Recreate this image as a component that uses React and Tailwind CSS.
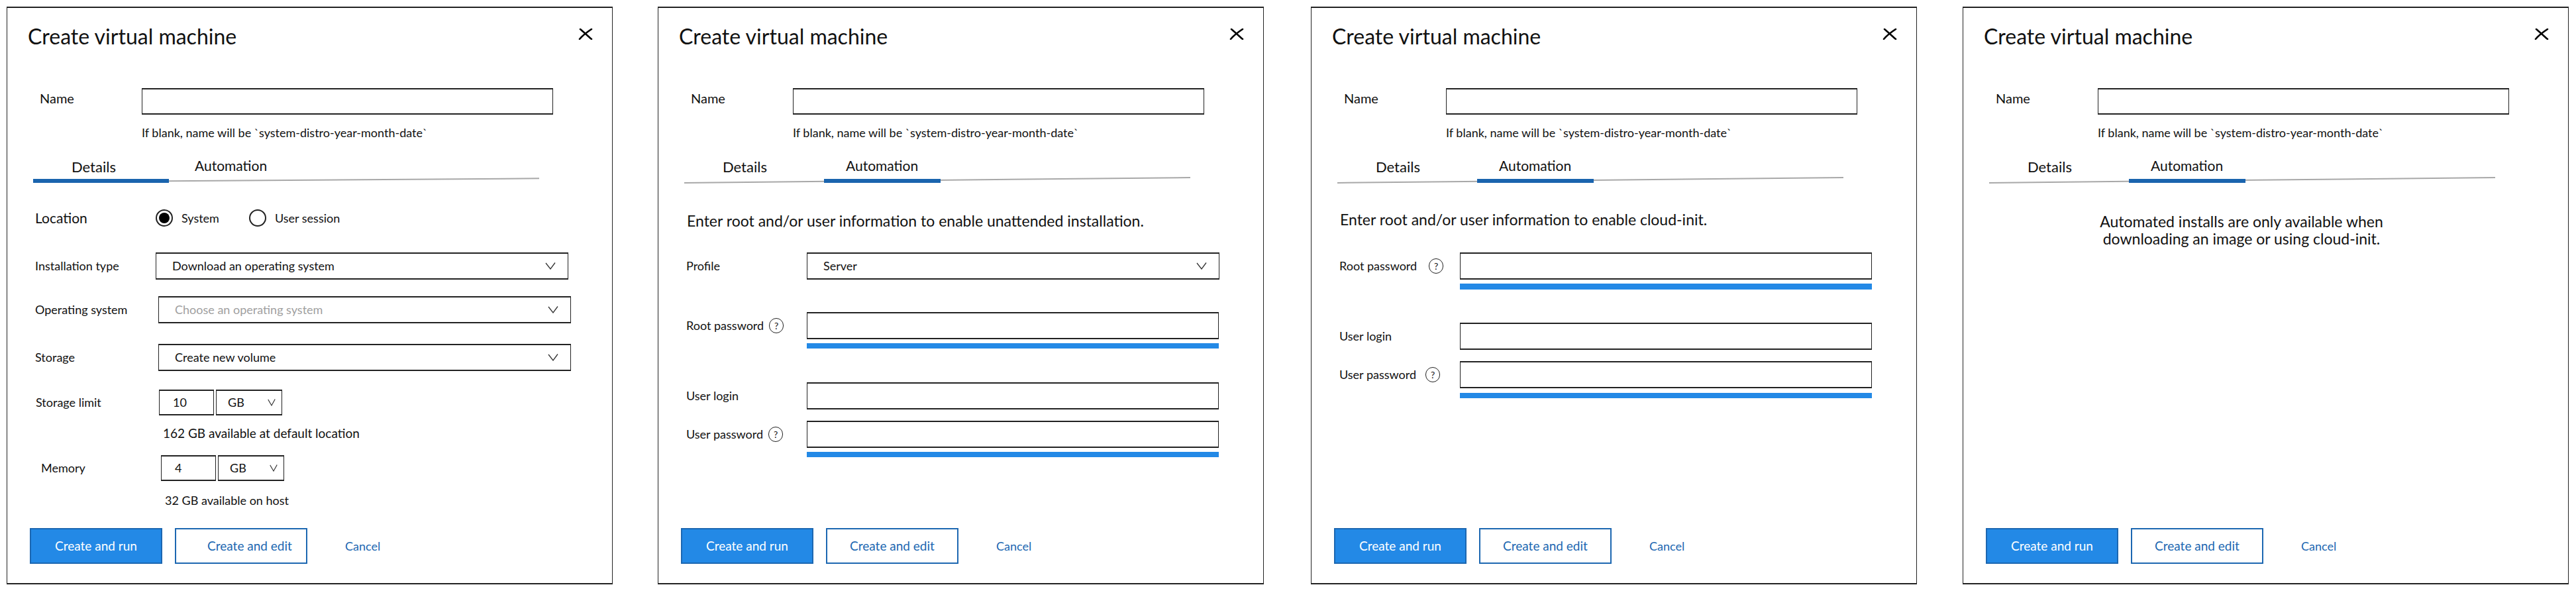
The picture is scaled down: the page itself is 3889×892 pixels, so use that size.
import React from "react";

function Chevron({ small }) {
  return (
    <svg className={small ? "h-[11px] w-[12px] shrink-0" : "h-[11px] w-[16px] shrink-0"} viewBox="0 0 16 11" preserveAspectRatio="none" fill="none">
      <path d="M1 1 L8 10 L15 0.5" stroke="#333" strokeWidth="1.3" />
    </svg>
  );
}

function CloseX() {
  return (
    <svg className="mt-[8px] h-[17px] w-[22px]" viewBox="0 0 22 17" fill="none">
      <path d="M3 1 C8 5 14 11 20 16 M20 1 C14 5 7 10 2 16" stroke="#000" strokeWidth="2.6" strokeLinecap="round" />
    </svg>
  );
}

function Select({ text, muted, className }) {
  return (
    <div className={"flex h-[41px] w-[623px] items-center justify-between border-y-2 border-x border-[#222] pl-[24px] pr-[18px] text-[18px] " + (muted ? "text-[#a0a0a0] " : "") + (className || "")}>
      <span>{text}</span>
      <Chevron />
    </div>
  );
}

function Input({ className }) {
  return <div className={"h-[41px] w-[622px] border-y-2 border-x border-[#222] " + (className || "")} />;
}

function Bar({ className }) {
  return <div className={"ml-[224px] h-[8px] w-[622px] bg-[#2389e6] " + (className || "")} />;
}

function Help({ className }) {
  return (
    <span className={"flex h-[23px] w-[22px] items-center justify-center rounded-full border border-[#222] text-[14px] leading-none " + (className || "")}>?</span>
  );
}

function Row({ label, labelClass, className, children }) {
  return (
    <div className={"flex items-center " + (className || "")}>
      <div className={"w-[224px] shrink-0 pl-[42px] " + (labelClass || "text-[18px]")}>{label}</div>
      {children}
    </div>
  );
}

function Radio({ on }) {
  return (
    <span className="flex h-[26px] w-[26px] shrink-0 items-center justify-center rounded-full border-2 border-[#222]">
      {on ? <span className="h-[16px] w-[16px] rounded-full bg-black" /> : null}
    </span>
  );
}

function Sized({ value, hintValue, className, hintClass, labelClass, label }) {
  return (
    <>
      <div className={"flex items-center " + (className || "")}>
        <div className={"shrink-0 text-[18px] " + labelClass}>{label}</div>
        <div className="flex h-[39px] w-[83px] items-center border-y-2 border-x border-[#222] pl-[20px] text-[18px]">{value}</div>
        <div className="ml-[3px] flex h-[39px] w-[100px] items-center justify-between border-y-2 border-x border-[#222] pl-[17px] pr-[9px] text-[18px]">
          <span>GB</span>
          <Chevron small />
        </div>
      </div>
      <div className={"h-[20px] leading-[20px] " + hintClass}>{hintValue}</div>
    </>
  );
}

function Footer({ editClass }) {
  return (
    <div className="mt-auto flex items-center pb-[29px] pl-[34px] text-[19px]">
      <button className="h-[54px] w-[200px] border-2 border-[#1c67b1] bg-[#2389e6] text-white">Create and run</button>
      <button className={"ml-[19px] h-[54px] w-[200px] border-2 border-[#1c67b1] bg-white text-[#1c67b1] " + (editClass || "")}>Create and edit</button>
      <span className="ml-[57px] text-[18px] text-[#1c67b1]">Cancel</span>
    </div>
  );
}

function Panel({ active, className, children, editClass, lineClass }) {
  return (
    <div className={"flex h-[872px] w-[915px] shrink-0 flex-col border-y-2 border-x border-[#222] bg-white text-[#111] " + (className || "")}>
      <div className="flex items-start justify-between pl-[31px] pr-[29px] pt-[23px]">
        <h1 className="h-[40px] text-[32px] font-normal leading-[40px]">Create virtual machine</h1>
        <CloseX />
      </div>
      <div className="mt-[58px] flex items-center pl-[49px]">
        <div className="-mt-[10px] w-[154px] text-[20px]">Name</div>
        <div className="h-[40px] w-[621px] border-y-2 border-x border-[#222]" />
      </div>
      <div className="mt-[17px] h-[20px] pl-[203px] text-[18px] leading-[20px]">If blank, name will be `system-distro-year-month-date`</div>
      <div className="relative z-10 ml-[39px] mt-[26px] flex h-[40px] w-[764px]">
        <div className={"flex h-[40px] w-[205px] items-start pl-[58px] pt-[2px] text-[22px] leading-[28px] " + (active === 0 ? "border-b-[6px] border-[#1a64ae]" : "")}>Details</div>
        <div className={"ml-[6px] flex h-[40px] w-[176px] items-start pl-[33px] text-[21px] leading-[28px] " + (active === 1 ? "border-b-[6px] border-[#1a64ae]" : "")}>Automation</div>
      </div>
      <div className={"ml-[39px] -mt-[5px] h-[2px] w-[764px] bg-[#a8a8a8] " + (lineClass || "")} />
      {children}
      <Footer editClass={editClass} />
    </div>
  );
}

export default function App() {
  return (
    <div className="flex min-h-[892px] w-[3889px] items-start bg-white pl-[10px] pt-[10px] [font-family:Lato,sans-serif]">
      <Panel active={0} editClass="pl-[26px]" lineClass="-rotate-[0.4deg]">
        <Row label="Location" labelClass="text-[21px] leading-[26px]" className="mt-[43px] h-[26px]">
          <Radio on />
          <span className="ml-[13px] text-[18px] leading-[26px]">System</span>
          <span className="ml-[45px]"><Radio /></span>
          <span className="ml-[13px] text-[18px] leading-[26px]">User session</span>
        </Row>
        <Row label="Installation type" className="mt-[39px]">
          <Select text="Download an operating system" />
        </Row>
        <Row label="Operating system" className="mt-[25px]">
          <Select text="Choose an operating system" muted className="ml-[4px] h-[39px]" />
        </Row>
        <Row label="Storage" className="mt-[31px]">
          <Select text="Create new volume" className="ml-[4px] h-[39px]" />
        </Row>
        <Sized label="Storage limit" labelClass="w-[229px] pl-[43px]" value="10" className="mt-[28px]" hintValue="162 GB available at default location" hintClass="mt-[17px] pl-[235px] text-[19px]" />
        <Sized label="Memory" labelClass="w-[232px] pl-[51px]" value="4" className="mt-[23px]" hintValue="32 GB available on host" hintClass="mt-[19px] pl-[238px] text-[18px]" />
      </Panel>

      <Panel active={1} className="ml-[68px]" lineClass="-rotate-[0.6deg]">
        <div className="ml-[43px] mt-[46px] h-[28px] text-[23px] leading-[28px]">Enter root and/or user information to enable unattended installation.</div>
        <Row label="Profile" className="mt-[34px]">
          <Select text="Server" />
        </Row>
        <Row label={<span className="flex items-center">Root password<Help className="ml-[8px]" /></span>} className="mt-[49px]">
          <Input />
        </Row>
        <Bar className="mt-[6px]" />
        <Row label="User login" className="mt-[51px]">
          <Input className="h-[40px]" />
        </Row>
        <Row label={<span className="flex items-center">User password<Help className="ml-[8px]" /></span>} className="mt-[17px]">
          <Input />
        </Row>
        <Bar className="mt-[6px]" />
      </Panel>

      <Panel active={1} className="ml-[71px]" lineClass="-rotate-[0.6deg]">
        <div className="ml-[43px] mt-[44px] h-[28px] text-[23px] leading-[28px]">Enter root and/or user information to enable cloud-init.</div>
        <Row label={<span className="flex items-center">Root password<Help className="ml-[18px]" /></span>} className="mt-[36px]">
          <Input />
        </Row>
        <Bar className="mt-[6px] h-[9px]" />
        <Row label="User login" className="mt-[50px]">
          <Input className="h-[40px]" />
        </Row>
        <Row label={<span className="flex items-center">User password<Help className="ml-[14px]" /></span>} className="mt-[17px]">
          <Input className="h-[40px]" />
        </Row>
        <Bar className="mt-[7px]" />
      </Panel>

      <Panel active={1} className="ml-[69px]" lineClass="-rotate-[0.6deg]">
        <div className="ml-[190px] mt-[48px] w-[460px] text-center text-[23px] leading-[26px]">
          Automated installs are only available when
          <br />
          downloading an image or using cloud-init.
        </div>
      </Panel>
    </div>
  );
}
